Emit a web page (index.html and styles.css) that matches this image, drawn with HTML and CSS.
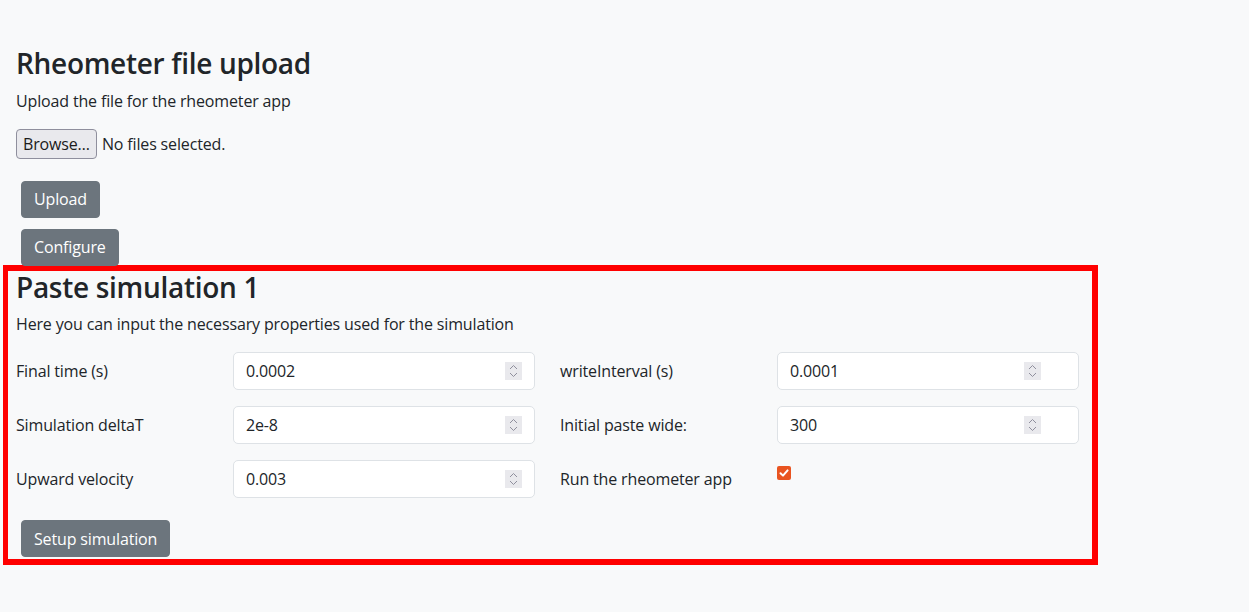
FILE: index.html
```html
<!DOCTYPE html>
<html>
<head>
<meta charset="utf-8">
<link rel="stylesheet" href="styles.css">
</head>
<body>
<div class="page">
  <h3 class="title">Rheometer file upload</h3>
  <p class="lead-text">Upload the file for the rheometer app</p>
  <div class="file-row">
    <span class="browse">Browse…</span>
    <span class="file-status">No files selected.</span>
  </div>
  <div class="btn-stack">
    <button class="btn">Upload</button>
    <button class="btn">Configure</button>
  </div>
</div>
<div class="sim-box">
  <h3 class="title">Paste simulation 1</h3>
  <p class="lead-text">Here you can input the necessary properties used for the simulation</p>
  <div class="form-grid">
    <label class="lbl">Final time (s)</label>
    <div class="num"><input type="text" value="0.0002"><span class="spin"><svg width="9" height="14" viewBox="0 0 9 14"><path d="M1 5 L4.5 1.5 L8 5 M1 9 L4.5 12.5 L8 9" fill="none" stroke="#8f8f9d" stroke-width="1"/></svg></span></div>
    <label class="lbl lbl2">writeInterval (s)</label>
    <div class="num"><input type="text" value="0.0001"><span class="spin"><svg width="9" height="14" viewBox="0 0 9 14"><path d="M1 5 L4.5 1.5 L8 5 M1 9 L4.5 12.5 L8 9" fill="none" stroke="#8f8f9d" stroke-width="1"/></svg></span></div>

    <label class="lbl">Simulation deltaT</label>
    <div class="num"><input type="text" value="2e-8"><span class="spin"><svg width="9" height="14" viewBox="0 0 9 14"><path d="M1 5 L4.5 1.5 L8 5 M1 9 L4.5 12.5 L8 9" fill="none" stroke="#8f8f9d" stroke-width="1"/></svg></span></div>
    <label class="lbl lbl2">Initial paste wide:</label>
    <div class="num"><input type="text" value="300"><span class="spin"><svg width="9" height="14" viewBox="0 0 9 14"><path d="M1 5 L4.5 1.5 L8 5 M1 9 L4.5 12.5 L8 9" fill="none" stroke="#8f8f9d" stroke-width="1"/></svg></span></div>

    <label class="lbl">Upward velocity</label>
    <div class="num"><input type="text" value="0.003"><span class="spin"><svg width="9" height="14" viewBox="0 0 9 14"><path d="M1 5 L4.5 1.5 L8 5 M1 9 L4.5 12.5 L8 9" fill="none" stroke="#8f8f9d" stroke-width="1"/></svg></span></div>
    <label class="lbl lbl2">Run the rheometer app</label>
    <div class="check-cell"><span class="check"><svg width="14" height="14" viewBox="0 0 14 14"><path d="M3.5 7.2 L6 9.6 L10.6 4.4" fill="none" stroke="#fff" stroke-width="2" stroke-linecap="round" stroke-linejoin="round"/></svg></span></div>
  </div>
  <button class="btn">Setup simulation</button>
</div>
</body>
</html>
```
FILE: styles.css
```css
html, body {
  margin: 0;
  padding: 0;
  background: #f8f9fa;
}
body {
  font-family: "Open Sans", "Noto Sans", sans-serif;
  font-size: 16px;
  line-height: 1.5;
  color: #212529;
  letter-spacing: -0.15px;
  width: 1249px;
  height: 612px;
  overflow: hidden;
}
.page {
  padding: 47px 16px 0 16px;
}
.title {
  margin: 0 0 8px 0;
  font-size: 28px;
  line-height: 1.2;
  font-weight: 600;
  letter-spacing: -0.3px;
}
.lead-text {
  margin: 0 0 16px 0;
}
.file-row {
  display: flex;
  align-items: center;
  gap: 5px;
  margin-top: 2px;
  height: 30px;
}
.browse {
  box-sizing: border-box;
  height: 30px;
  padding: 0 6px;
  display: flex;
  align-items: center;
  background: #e9e9ed;
  border: 1px solid #8f8f9d;
  border-radius: 4px;
  color: #1b1b1b;
}
.btn-stack {
  display: flex;
  flex-direction: column;
  align-items: flex-start;
  padding-top: 17px;
}
.btn {
  font-family: inherit;
  font-size: 16px;
  line-height: 24px;
  letter-spacing: -0.15px;
  color: #fff;
  background: #6c757d;
  border: 1px solid #6c757d;
  border-radius: 4px;
  padding: 6px 12px;
  margin: 5px;
  height: 37px;
  box-sizing: border-box;
  display: flex;
  align-items: center;
}
.btn-stack .btn {
  margin: 5px 5px 6px 5px;
}
.sim-box {
  box-sizing: border-box;
  width: 1095px;
  height: 300px;
  margin-left: 3px;
  margin-top: -7px;
  border: 6px solid #ff0000;
  border-left-width: 5px;
  padding: 0 8px 0 8px;
}
.form-grid {
  display: grid;
  grid-template-columns: 217px 302px 217px 302px;
  grid-auto-rows: 38px;
  row-gap: 16px;
  margin-bottom: 16px;
}
.lbl {
  display: flex;
  align-items: center;
}
.lbl2 {
  margin-left: 25px;
  width: 192px;
}
.lbl2 + .num, .lbl2 + .check-cell {
  margin-left: 25px;
}
.num {
  position: relative;
}
.num input {
  box-sizing: border-box;
  width: 302px;
  height: 38px;
  border: 1px solid #dee2e6;
  border-radius: 5px;
  background: #fff;
  font-family: inherit;
  font-size: 16px;
  letter-spacing: -0.15px;
  color: #212529;
  padding: 6px 12px;
  outline: none;
}
.spin {
  position: absolute;
  right: 13px;
  top: 10px;
  width: 17px;
  height: 18px;
  background: #e9e9ed;
  display: flex;
  align-items: center;
  justify-content: center;
}
.check-cell {
  padding-top: 6px;
}
.check {
  display: flex;
  width: 14px;
  height: 14px;
  background: #e95420;
  border-radius: 2px;
}
.sim-box > .btn {
  margin: 22px 5px 0 5px;
}
```
